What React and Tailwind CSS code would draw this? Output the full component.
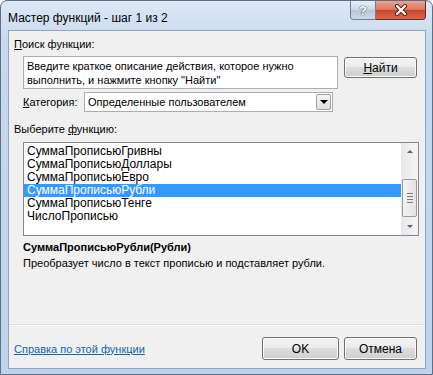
import React from "react";

const items = [
  "СуммаПрописьюГривны",
  "СуммаПрописьюДоллары",
  "СуммаПрописьюЕвро",
  "СуммаПрописьюРубли",
  "СуммаПрописьюТенге",
  "ЧислоПрописью",
];

const btn =
  "flex items-center justify-center rounded-[3px] border border-[#707070] bg-[linear-gradient(#f2f2f2_0%,#ebebeb_50%,#dddddd_50%,#cfcfcf_100%)] text-[12px] text-black shadow-[inset_0_0_0_1px_#fcfcfc]";

function CloseGlyph() {
  return (
    <svg width="14" height="12" viewBox="0 0 14 12">
      <path d="M3 2 L11 10 M11 2 L3 10" stroke="#5a1a10" strokeWidth="4.2" strokeLinecap="round" />
      <path d="M3 2 L11 10 M11 2 L3 10" stroke="#ffffff" strokeWidth="2.4" strokeLinecap="round" />
    </svg>
  );
}

function ScrollBar() {
  return (
    <div className="flex h-full w-[17px] flex-col bg-[linear-gradient(90deg,#e8e8e8,#f5f5f5)]">
      <div className="flex h-[17px] items-center justify-center">
        <div className="h-0 w-0 border-x-[3px] border-b-[3px] border-x-transparent border-b-[#4d6185]" />
      </div>
      <div className="h-[19px]" />
      <div className="mx-[1px] flex h-[38px] flex-col items-center justify-center gap-[2px] rounded-[2px] border border-[#9b9b9b] bg-[linear-gradient(90deg,#f3f3f3,#e3e3e3)]">
        <div className="h-px w-[6px] bg-[#7a7a7a]" />
        <div className="h-px w-[6px] bg-[#7a7a7a]" />
        <div className="h-px w-[6px] bg-[#7a7a7a]" />
        <div className="h-px w-[6px] bg-[#7a7a7a]" />
      </div>
      <div className="flex-1" />
      <div className="flex h-[17px] items-center justify-center">
        <div className="h-0 w-0 border-x-[3px] border-t-[3px] border-x-transparent border-t-[#4d6185]" />
      </div>
    </div>
  );
}

export default function App() {
  return (
    <div className="h-[375px] w-[433px] bg-white font-['Liberation_Sans',Arial,sans-serif] text-[11px] text-black">
      <div className="flex h-full w-full flex-col rounded-t-[7px] border border-[#5b6f88] bg-[linear-gradient(#dde8f5,#c8d9ee_40px,#bfd3ea)]">
        {/* title bar */}
        <div className="flex h-[29px] items-start">
          <div className="ml-[7px] mt-[9px] text-[12px] leading-[16px]">Мастер функций - шаг 1 из 2</div>
          <div className="flex-1" />
          <div className="mr-[6px] flex">
            <div className="flex h-[19px] w-[26px] items-center justify-center rounded-bl-[4px] border border-t-0 border-[#6f7f93] bg-[linear-gradient(#e9eff6,#c9d6e5_50%,#b5c5d8_50%,#cdd9e6)] text-[13px] font-bold leading-none text-white [text-shadow:0_0_1px_#2c3c52,0_0_1px_#2c3c52]">
              ?
            </div>
            <div className="flex h-[19px] w-[50px] items-center justify-center rounded-br-[4px] border border-l-0 border-t-0 border-[#6a2a20] bg-[linear-gradient(#e9a593,#d8735c_50%,#c7452b_50%,#d9664a)]">
              <CloseGlyph />
            </div>
          </div>
        </div>

        {/* client area */}
        <div className="mb-[5px] ml-[7px] mr-[6px] flex flex-1 flex-col border border-[#8fa4c0] bg-[#f0f0f0]">
          <div className="ml-[5px] mt-[5px] leading-[16px]">
            <span className="underline">П</span>оиск функции:
          </div>

          <div className="ml-[14px] mt-[4px] flex items-start">
            <div className="h-[33px] w-[315px] border border-[#abadb3] bg-white pl-[3px] pt-[2px] leading-[14px]">
              <div>Введите краткое описание действия, которое нужно</div>
              <div>выполнить, и нажмите кнопку "Найти"</div>
            </div>
            <div className={btn + " ml-[6px] mt-[1px] h-[21px] w-[73px] text-[11px]"}>
              <span className="underline">Н</span>айти
            </div>
          </div>

          <div className="ml-[14px] mt-[3px] flex items-center">
            <div className="w-[61px] leading-[16px]">
              <span className="underline">К</span>атегория:
            </div>
            <div className="flex h-[20px] w-[249px] items-center border border-[#abadb3] bg-white">
              <div className="flex-1 pl-[3px] leading-[16px]">Определенные пользователем</div>
              <div className="mr-[1px] flex h-[16px] w-[15px] items-center justify-center rounded-[2px] border border-[#a0a0a0] bg-[linear-gradient(#f6f6f6,#e0e0e0)]">
                <div className="h-0 w-0 border-x-[4px] border-t-[4px] border-x-transparent border-t-black" />
              </div>
            </div>
          </div>

          <div className="ml-[5px] mt-[9px] leading-[16px]">
            Выберите <span className="underline">ф</span>ункцию:
          </div>

          <div className="ml-[14px] mt-[5px] flex h-[94px] w-[396px] border border-[#828790] bg-white">
            <div className="flex flex-1 flex-col pt-[2px] text-[12px]">
              {items.map((it) => (
                <div
                  key={it}
                  className={
                    it === "СуммаПрописьюРубли"
                      ? "h-[13px] bg-[#3399ff] pl-[3px] leading-[13px] text-white"
                      : "h-[13px] pl-[3px] leading-[13px]"
                  }
                >
                  {it}
                </div>
              ))}
            </div>
            <ScrollBar />
          </div>

          <div className="ml-[14px] mt-[3px] font-bold leading-[16px]">СуммаПрописьюРубли(Рубли)</div>
          <div className="ml-[14px] leading-[16px]">Преобразует число в текст прописью и подставляет рубли.</div>

          <div className="flex-1" />
          <div className="h-px bg-[#d5dfe5]" />
          <div className="h-px bg-white" />

          <div className="mb-[8px] ml-[5px] mr-[8px] mt-[11px] flex h-[23px] items-center">
            <div className="text-[#0f67ad] underline leading-[16px]">Справка по этой функции</div>
            <div className="flex-1" />
            <div className={btn + " h-[23px] w-[77px] border-[#3c7fb1] shadow-[inset_0_0_0_1px_#bfe3f7]"}>OK</div>
            <div className={btn + " ml-[5px] h-[23px] w-[73px]"}>Отмена</div>
          </div>
        </div>
      </div>
    </div>
  );
}
